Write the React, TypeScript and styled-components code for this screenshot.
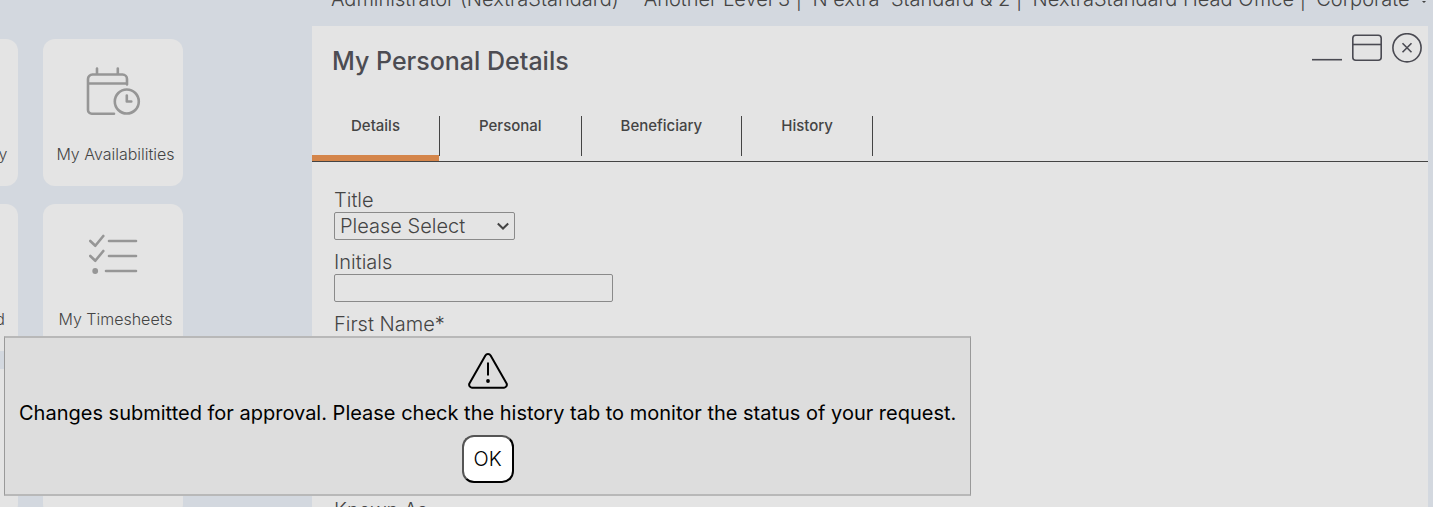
import React from 'react';
import styled, { createGlobalStyle } from 'styled-components';

const GlobalStyle = createGlobalStyle`
  * { box-sizing: border-box; }
  body {
    margin: 0;
    background: #d3d8df;
    color: #444;
    font-family: Inter, "Liberation Sans", sans-serif;
    font-weight: 300;
    font-size: 20px;
    line-height: 24px;
  }
`;

const Page = styled.div`
  display: grid;
  grid-template-columns: 312px minmax(0, 1fr);
  height: 100vh;
  overflow: hidden;
  position: relative;
`;

const Sidebar = styled.nav`
  display: grid;
  grid-template-columns: 140px 140px;
  grid-auto-rows: 147px;
  gap: 18px 25px;
  justify-content: end;
  padding: 39px 129px 0 0;
`;

const Tile = styled.a<{ $highlight?: boolean }>`
  display: flex;
  flex-direction: column;
  align-items: center;
  gap: 24px;
  padding-top: 25px;
  border-radius: 12px;
  background: #e4e4e4;
  color: ${(p) => (p.$highlight ? '#2f9be0' : '#444')};
  text-decoration: none;
`;

const TileIcon = styled.svg`
  width: 56px;
  height: 56px;
  flex: none;
  fill: none;
  stroke: #969696;
  stroke-width: 2.6;
  stroke-linecap: round;
  stroke-linejoin: round;
`;

const TileLabel = styled.span`
  padding-left: 5px;
  font-size: 16px;
  line-height: 20px;
  white-space: nowrap;
`;

const Main = styled.main`
  display: flex;
  flex-direction: column;
  padding-right: 5px;
  min-height: 0;
`;

const Context = styled.header`
  display: flex;
  flex: none;
  align-items: flex-end;
  justify-content: space-between;
  height: 26px;
  padding: 0 0 15px 19px;
  white-space: nowrap;

  svg {
    fill: none;
    stroke: #444;
    stroke-width: 1.5;
  }
`;

const Panel = styled.section`
  flex: 1 0 auto;
  background: #e4e4e4;
`;

const PanelHeader = styled.div`
  display: flex;
  align-items: flex-start;
  justify-content: space-between;
  height: 90px;
  padding: 7px 6px 0 20px;
`;

const PanelTitle = styled.h1`
  margin: 12px 0 0;
  font-size: 25px;
  font-weight: 500;
  line-height: 32px;
  color: #4c4c52;
`;

const WindowControls = styled.div`
  display: flex;
  gap: 10px;
`;

const ControlButton = styled.button`
  width: 30px;
  height: 30px;
  padding: 0;
  border: 0;
  background: none;

  svg {
    display: block;
    fill: none;
    stroke: #4a4a52;
    stroke-width: 1.6;
  }
`;

const TabBar = styled.div`
  display: flex;
  padding-bottom: 5px;
  border-bottom: 1px solid #444;
`;

const Tab = styled.button<{ $active?: boolean }>`
  position: relative;
  display: flex;
  align-items: flex-start;
  height: 40px;
  padding: 0 39px;
  border: 0;
  border-right: 1px solid #444;
  background: none;
  color: #444;
  font: 500 15px/20px Inter, "Liberation Sans", sans-serif;

  &::after {
    content: '';
    display: ${(p) => (p.$active ? 'block' : 'none')};
    position: absolute;
    left: 0;
    right: 0;
    bottom: -5px;
    height: 6px;
    background: #d4854a;
  }
`;

const Form = styled.form`
  display: flex;
  flex-direction: column;
  gap: 10px;
  padding: 26px 22px;
`;

const Field = styled.div`
  display: flex;
  flex-direction: column;
  align-items: flex-start;
`;

const fieldFont = '300 20px/24px Inter, "Liberation Sans", sans-serif';

const TextInput = styled.input`
  width: 279px;
  height: 28px;
  border: 1px solid #8a8a8a;
  border-radius: 2px;
  background: #e4e4e4;
  color: #444;
  font: ${fieldFont};
`;

const SelectBox = styled.div`
  display: grid;
  align-items: center;
  width: 181px;

  & > * { grid-area: 1 / 1; }

  svg {
    justify-self: end;
    margin-right: 5px;
    fill: none;
    stroke: #444;
    stroke-width: 2;
    pointer-events: none;
  }
`;

const SelectInput = styled.select`
  appearance: none;
  height: 28px;
  padding: 0 5px;
  border: 1px solid #8a8a8a;
  border-radius: 2px;
  background: #e4e4e4;
  color: #444;
  font: ${fieldFont};
`;

const Dialog = styled.div`
  position: absolute;
  left: 4px;
  top: 336px;
  display: flex;
  flex-direction: column;
  align-items: center;
  padding: 15px 14px 11px;
  border: solid;
  border-width: 2px 1px;
  border-color: #b8b8b8 #999;
  background: #ddd;
  color: #000;
`;

const Message = styled.p`
  margin: 12px 0 10px;
  font-weight: 400;
  white-space: nowrap;
`;

const OkButton = styled.button`
  height: 48px;
  padding: 0 10px;
  border: 2px solid;
  border-color: #555 #000 #000 #555;
  border-radius: 12px;
  background: #fff;
  color: #000;
  font: ${fieldFont};
`;

const CalendarIcon = () => (
  <TileIcon viewBox="0 0 56 56" aria-hidden="true">
    <path d="M42 20.500V15a4.500 4.500 0 0 0-4.500-4.500H7.500A4.500 4.500 0 0 0 3 15v31a3.800 3.800 0 0 0 3.800 3.800H29M3 19.500h39M12 4.500v6M32.800 4.500v6" />
    <circle cx="41.800" cy="37.500" r="12" />
    <path d="M41.800 31.500v6h4.500" />
  </TileIcon>
);

const ChecklistIcon = () => (
  <TileIcon viewBox="0 0 56 56" aria-hidden="true">
    <path d="M5.300 12l5 4.800 8-9.800M24 12h27M5.300 27l5 4.800 8-9.800M24 27h27M21 42h30" />
    <circle cx="10.200" cy="42" r="2.900" fill="#969696" stroke="none" />
  </TileIcon>
);

const tiles = [
  { label: 'Team Directory' },
  { label: 'My Availabilities', icon: <CalendarIcon /> },
  { label: 'My Dashboard' },
  { label: 'My Timesheets', icon: <ChecklistIcon /> },
  { label: 'My Requests', highlight: true },
  { label: '' },
];

const context = [
  'Administrator (NextraStandard)',
  '- Another Level 3 |',
  "N'extra' Standard & 2 |",
  'NextraStandard Head Office |',
  'Corporate',
];

const textFields = ['Initials', 'First Name*', 'Middle Name', 'Surname*', 'Known As'];

export default function App() {
  return (
    <>
      <GlobalStyle />
      <Page>
        <Sidebar aria-label="Shortcuts">
          {tiles.map((tile, i) => (
            <Tile key={i} href="#" $highlight={tile.highlight}>
              {tile.icon ?? <TileIcon viewBox="0 0 56 56" aria-hidden="true" />}
              <TileLabel>{tile.label}</TileLabel>
            </Tile>
          ))}
        </Sidebar>
        <Main>
          <Context>
            {context.map((part) => (
              <span key={part}>{part}</span>
            ))}
            <svg width="8" height="10" viewBox="0 0 8 10" aria-hidden="true">
              <path d="M0-3l4 4 4-4" />
            </svg>
          </Context>
          <Panel>
            <PanelHeader>
              <PanelTitle>My Personal Details</PanelTitle>
              <WindowControls>
                <ControlButton type="button" aria-label="Minimise">
                  <svg width="30" height="30" viewBox="0 0 30 30"><path d="M0 26.700h30" /></svg>
                </ControlButton>
                <ControlButton type="button" aria-label="Maximise">
                  <svg width="30" height="30" viewBox="0 0 30 30">
                    <rect x=".8" y="2.300" width="28.400" height="25" rx="3" />
                    <path d="M1 11.500h28" />
                  </svg>
                </ControlButton>
                <ControlButton type="button" aria-label="Close">
                  <svg width="30" height="30" viewBox="0 0 30 30">
                    <circle cx="15" cy="14.800" r="14.100" />
                    <path d="M10.500 10.300l9 9M19.500 10.300l-9 9" />
                  </svg>
                </ControlButton>
              </WindowControls>
            </PanelHeader>
            <TabBar role="tablist">
              <Tab type="button" role="tab" aria-selected="true" $active>Details</Tab>
              <Tab type="button" role="tab">Personal</Tab>
              <Tab type="button" role="tab">Beneficiary</Tab>
              <Tab type="button" role="tab">History</Tab>
            </TabBar>
            <Form>
              <Field>
                <label htmlFor="title">Title</label>
                <SelectBox>
                  <SelectInput id="title">
                    <option>Please Select</option>
                  </SelectInput>
                  <svg width="14" height="10" viewBox="0 0 14 10" aria-hidden="true">
                    <path d="M1.800 2.500l5.200 5 5.200-5" />
                  </svg>
                </SelectBox>
              </Field>
              {textFields.map((name, i) => (
                <Field key={name}>
                  <label htmlFor={`field-${i}`}>{name}</label>
                  <TextInput id={`field-${i}`} type="text" />
                </Field>
              ))}
            </Form>
          </Panel>
        </Main>
        <Dialog role="alertdialog" aria-describedby="dialog-message">
          <svg width="40" height="36" viewBox="0 0 40 36" fill="none" stroke="#000" strokeWidth="2" strokeLinejoin="round" aria-hidden="true">
            <path d="M17.400 2.600a3 3 0 0 1 5.200 0L38.600 30.500a3 3 0 0 1-2.600 4.200H4a3 3 0 0 1-2.600-4.200z" />
            <path d="M20 9.500v13" />
            <circle cx="20" cy="28" r="1.900" fill="#000" stroke="none" />
          </svg>
          <Message id="dialog-message">
            Changes submitted for approval. Please check the history tab to monitor the status of your request.
          </Message>
          <OkButton type="button">OK</OkButton>
        </Dialog>
      </Page>
    </>
  );
}
